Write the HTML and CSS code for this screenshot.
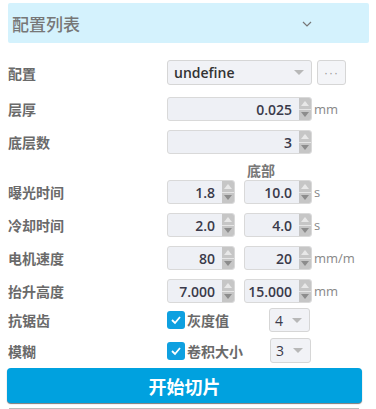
FILE: index.html
```html
<!DOCTYPE html>
<html lang="zh-CN">
<head>
    <meta charset="UTF-8">
    <meta name="viewport" content="width=device-width, initial-scale=1.0">
    <title>切片设置</title>
    <link rel="stylesheet" href="styles.css">
</head>
<body>
    <div class="panel">
        <div class="configHeader">
            <span>配置列表</span>
            <svg class="chevron" width="10" height="6" viewBox="0 0 10 6">
                <polyline points="1,1 5,5 9,1" fill="none" stroke="#777" stroke-width="1.2"/>
            </svg>
        </div>

        <div class="row rowFirst">
            <label class="rowLabel">配置</label>
            <div class="selectBox wide">
                <span class="selectText">undefine</span>
                <span class="caret"></span>
            </div>
            <button class="moreBtn">&middot;&middot;&middot;</button>
        </div>

        <div class="row rowSecond">
            <label class="rowLabel">层厚</label>
            <div class="numBox wide">
                <span class="numValue">0.025</span>
                <span class="spinner"><i class="up"></i><i class="down"></i></span>
            </div>
            <span class="unit">mm</span>
        </div>

        <div class="row">
            <label class="rowLabel">底层数</label>
            <div class="numBox wide">
                <span class="numValue">3</span>
                <span class="spinner"><i class="up"></i><i class="down"></i></span>
            </div>
        </div>

        <div class="subHeader">底部</div>

        <div class="row rowTight">
            <label class="rowLabel">曝光时间</label>
            <div class="numBox half">
                <span class="numValue">1.8</span>
                <span class="spinner"><i class="up"></i><i class="down"></i></span>
            </div>
            <div class="numBox half">
                <span class="numValue">10.0</span>
                <span class="spinner"><i class="up"></i><i class="down"></i></span>
            </div>
            <span class="unit">s</span>
        </div>

        <div class="row">
            <label class="rowLabel">冷却时间</label>
            <div class="numBox half">
                <span class="numValue">2.0</span>
                <span class="spinner"><i class="up"></i><i class="down"></i></span>
            </div>
            <div class="numBox half">
                <span class="numValue">4.0</span>
                <span class="spinner"><i class="up"></i><i class="down"></i></span>
            </div>
            <span class="unit">s</span>
        </div>

        <div class="row">
            <label class="rowLabel">电机速度</label>
            <div class="numBox half">
                <span class="numValue">80</span>
                <span class="spinner"><i class="up"></i><i class="down"></i></span>
            </div>
            <div class="numBox half">
                <span class="numValue">20</span>
                <span class="spinner"><i class="up"></i><i class="down"></i></span>
            </div>
            <span class="unit">mm/m</span>
        </div>

        <div class="row">
            <label class="rowLabel">抬升高度</label>
            <div class="numBox half">
                <span class="numValue">7.000</span>
                <span class="spinner"><i class="up"></i><i class="down"></i></span>
            </div>
            <div class="numBox half">
                <span class="numValue">15.000</span>
                <span class="spinner"><i class="up"></i><i class="down"></i></span>
            </div>
            <span class="unit">mm</span>
        </div>

        <div class="row rowCheck">
            <label class="rowLabel">抗锯齿</label>
            <div class="checkGroup">
                <span class="checkBox">
                    <svg width="12" height="10" viewBox="0 0 12 10"><polyline points="2,5 5,8 10,2" fill="none" stroke="#fff" stroke-width="1.8"/></svg>
                </span>
                <span class="checkText">灰度值</span>
            </div>
            <div class="selectBox small">
                <span class="selectText">4</span>
                <span class="caret"></span>
            </div>
        </div>

        <div class="row rowCheck2">
            <label class="rowLabel">模糊</label>
            <div class="checkGroup">
                <span class="checkBox">
                    <svg width="12" height="10" viewBox="0 0 12 10"><polyline points="2,5 5,8 10,2" fill="none" stroke="#fff" stroke-width="1.8"/></svg>
                </span>
                <span class="checkText">卷积大小</span>
            </div>
            <div class="selectBox small">
                <span class="selectText">3</span>
                <span class="caret"></span>
            </div>
        </div>

        <button class="sliceBtn">开始切片</button>
        <div class="bottomLine"></div>
    </div>
</body>
</html>
```

FILE: styles.css
```css
body {
    margin: 0;
    font-family: "Open Sans", "Noto Sans CJK SC", sans-serif;
    background-color: white;
}
.panel {
    padding: 3px 7px 0 8px;
}
.configHeader {
    height: 40px;
    width: 361px;
    background-color: rgb(212, 242, 253);
    border-radius: 2px;
    display: flex;
    align-items: center;
    justify-content: space-between;
    padding: 0 57px 0 4px;
    box-sizing: border-box;
    color: #777;
    font-family: "Noto Sans CJK SC", sans-serif;
    font-size: 17px;
    font-weight: 500;
}
.chevron {
    margin-top: 1px;
}
.row {
    display: flex;
    align-items: center;
    height: 24px;
    margin-top: 9px;
}
.rowFirst {
    height: 25px;
    margin-top: 17px;
}
.rowSecond {
    margin-top: 12px;
}
.rowTight {
    margin-top: 0;
}
.rowCheck {
    margin-top: 5px;
}
.rowCheck2 {
    height: 25px;
    margin-top: 6px;
}
.rowLabel {
    width: 159px;
    color: #6a6a6a;
    font-family: "Noto Sans CJK SC", sans-serif;
    font-size: 14px;
    font-weight: 700;
}
.subHeader {
    height: 20px;
    margin-top: 6px;
    padding-left: 239px;
    color: #777;
    font-family: "Noto Sans CJK SC", sans-serif;
    font-size: 14px;
    font-weight: 700;
    line-height: 20px;
}
.selectBox {
    height: 100%;
    box-sizing: border-box;
    border: 1px solid #d6d6d6;
    border-radius: 3px;
    background-color: #f1f2f6;
    display: flex;
    align-items: center;
    justify-content: space-between;
    padding: 0 7px 0 6px;
    color: #333;
    font-size: 14px;
    font-weight: 600;
}
.selectBox.wide {
    width: 145px;
}
.selectBox.small {
    width: 41px;
    padding-left: 5px;
    font-weight: 400;
    color: #3a3a4a;
}
.caret {
    width: 0;
    height: 0;
    border-left: 5px solid transparent;
    border-right: 5px solid transparent;
    border-top: 5px solid #b8b8b8;
}
.moreBtn {
    margin-left: 5px;
    width: 29px;
    height: 25px;
    padding: 0;
    border: 1px solid #d6d6d6;
    border-radius: 3px;
    background-color: #f4f5f8;
    color: #999;
    font-size: 12px;
    letter-spacing: 1px;
}
.numBox {
    height: 100%;
    box-sizing: border-box;
    border: 1px solid #d9d9d9;
    border-radius: 3px;
    background-color: #eef0f5;
    display: flex;
    align-items: center;
}
.numBox.wide {
    width: 145px;
}
.numBox.half {
    width: 68px;
}
.numBox.half + .numBox.half {
    margin-left: 9px;
}
.numValue {
    flex: 1;
    text-align: right;
    padding-right: 7px;
    color: #3a3a4a;
    font-size: 14px;
    font-weight: 600;
}
.spinner {
    width: 12px;
    height: 100%;
    background-color: #c6c6c6;
    border-radius: 0 2px 2px 0;
    display: flex;
    flex-direction: column;
}
.spinner i {
    flex: 1;
    display: flex;
    align-items: center;
    justify-content: center;
}
.spinner .up {
    border-bottom: 1px solid #e6e6e6;
}
.spinner .up::after {
    content: "";
    border-left: 4px solid transparent;
    border-right: 4px solid transparent;
    border-bottom: 5px solid #e8e8e8;
}
.spinner .down::after {
    content: "";
    border-left: 4px solid transparent;
    border-right: 4px solid transparent;
    border-top: 5px solid #8c8c8c;
}
.unit {
    margin-left: 2px;
    color: #888;
    font-size: 13px;
}
.checkGroup {
    width: 102px;
    display: flex;
    align-items: center;
    gap: 2px;
}
.rowCheck2 .checkGroup {
    width: 103px;
}
.checkBox {
    width: 18px;
    height: 18px;
    border-radius: 3px;
    background-color: rgb(14, 160, 224);
    display: flex;
    align-items: center;
    justify-content: center;
}
.checkText {
    color: #6a6a6a;
    font-family: "Noto Sans CJK SC", sans-serif;
    font-size: 14px;
    font-weight: 700;
}
.sliceBtn {
    display: block;
    margin: 5px 0 0 -1px;
    width: 355px;
    height: 35px;
    border: none;
    border-radius: 4px;
    background-color: rgb(0, 161, 223);
    box-shadow: 0 1px 1px 0 #7a7a7a;
    color: white;
    font-family: "Noto Sans CJK SC", sans-serif;
    font-size: 18px;
    font-weight: 700;
}
.bottomLine {
    margin: 5px 0 0 1px;
    width: 350px;
    height: 1px;
    background-color: #bbb;
}
```
